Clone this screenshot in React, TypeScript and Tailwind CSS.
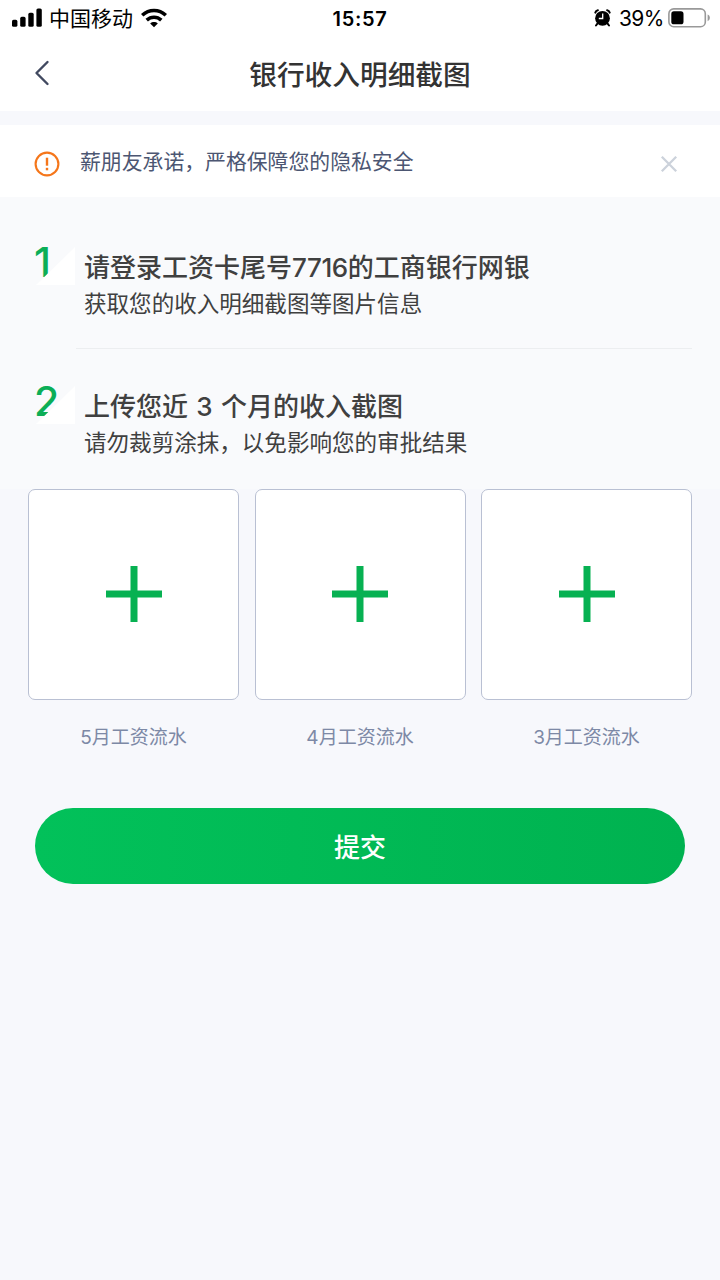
import React from "react";

const months = ["5月工资流水", "4月工资流水", "3月工资流水"];

function SignalIcon() {
  return (
    <svg className="h-5 w-[30px] shrink-0" viewBox="0 0 30 20">
      <rect x="0" y="11.8" width="5.4" height="7" rx="1.6" />
      <rect x="8.2" y="8.8" width="5.4" height="10" rx="1.6" />
      <rect x="16.3" y="4.8" width="5.4" height="14" rx="1.6" />
      <rect x="24.4" y="0.4" width="5.4" height="18.4" rx="1.6" />
    </svg>
  );
}

function WifiIcon() {
  return (
    <svg className="h-5 w-[26px] shrink-0" viewBox="0 0 26 20">
      <g fill="none" stroke="#000" strokeWidth="3.6">
        <path d="M1.2 7.3C8 .9 18 .9 24.8 7.3" />
        <path d="M5.7 12.1c4.3-3.9 10.3-3.9 14.6 0" />
      </g>
      <path d="M13 19.2l-3.8-3.7c2.2-1.9 5.4-1.9 7.6 0z" />
    </svg>
  );
}

function AlarmIcon() {
  return (
    <svg className="h-[18px] w-[17px] shrink-0" viewBox="0 0 17 18">
      <circle cx="8.5" cy="9.3" r="7.4" />
      <g fill="none" stroke="#000" strokeWidth="2" strokeLinecap="round">
        <path d="M1.3 3.6C1.7 2.4 2.6 1.5 3.9 1.2M15.7 3.6c-.4-1.2-1.3-2.1-2.6-2.4M3.4 14.7l-1.4 1.8M13.6 14.7l1.4 1.8" />
      </g>
      <path d="M8.7 4.6v4.9H4.8" fill="none" stroke="#fff" strokeWidth="1.3" />
    </svg>
  );
}

function BatteryIcon() {
  return (
    <svg className="h-5 w-[43px] shrink-0" viewBox="0 0 43 20">
      <rect x="0.9" y="0.9" width="36.4" height="17.8" rx="4.8" fill="#fff" stroke="#999" strokeWidth="1.6" />
      <rect x="3.3" y="3.3" width="12.2" height="13" rx="2.6" />
      <path d="M39.6 6.6c3 1.2 3 5.4 0 6.6z" fill="#999" />
    </svg>
  );
}

function StepNumber({ value }: { value: number }) {
  return (
    <div className="relative h-[39px] w-[39px] shrink-0">
      <span className="-ml-0.5 block text-[41px] font-medium leading-[32px] text-[#0bae57]">{value}</span>
      <svg className="absolute inset-0 h-full w-full" viewBox="0 0 39 39">
        <path d="M39 1v38H0z" fill="#fff" />
      </svg>
    </div>
  );
}

function Step({ value, title, detail }: { value: number; title: React.ReactNode; detail: string }) {
  return (
    <div className="flex gap-[9px] whitespace-nowrap pl-9 text-[#404040]">
      <StepNumber value={value} />
      <div>
        <h2 className="h-[37px] pt-[3px] text-[26px] font-medium leading-[37px]">{title}</h2>
        <p className="h-[37px] pt-0.5 text-[22.55px] leading-[37px]">{detail}</p>
      </div>
    </div>
  );
}

export default function App() {
  return (
    <div className="flex h-[1280px] w-[720px] flex-col overflow-hidden bg-[#f7f8fc] font-['Inter','Noto_Sans_CJK_SC',sans-serif]">
      <div className="grid h-9 shrink-0 grid-cols-3 items-center whitespace-nowrap bg-white text-black">
        <div className="flex items-center pl-3">
          <SignalIcon />
          <span className="ml-[7px] pt-0.5 text-[21px] leading-[34px]">中国移动</span>
          <span className="ml-2 flex"><WifiIcon /></span>
        </div>
        <div className="pt-0.5 text-center text-[20px] font-semibold leading-[34px] tracking-[0.7px]">15:57</div>
        <div className="flex items-center justify-end pr-[9px]">
          <AlarmIcon />
          <span className="ml-2 mr-1 pt-0.5 text-[21px] leading-[34px] tracking-[-0.5px]">39%</span>
          <BatteryIcon />
        </div>
      </div>

      <header className="grid h-[75px] shrink-0 grid-cols-[120px_1fr_120px] items-center bg-white">
        <button className="pb-0.5 pl-[34px]" aria-label="返回">
          <svg className="block h-[26px] w-4" viewBox="0 0 16 26" fill="none" stroke="#414960" strokeWidth="2.4" strokeLinecap="round" strokeLinejoin="round">
            <path d="M13.5 2L2.5 13l11 11" />
          </svg>
        </button>
        <h1 className="pt-1 text-center text-[27.7px] font-medium text-[#333]">银行收入明细截图</h1>
      </header>

      <div className="mt-3.5 flex h-[72px] shrink-0 items-center bg-white pl-[34px] pr-[42px]">
        <svg className="mt-[5px] h-[26px] w-[26px] shrink-0" viewBox="0 0 26 26" fill="none">
          <circle cx="13" cy="13" r="11.4" stroke="#f5761a" strokeWidth="2.1" />
          <path d="M13 6.7v8" stroke="#f5761a" strokeWidth="2.4" />
          <path d="M13 16.8v2.5" stroke="#f5761a" strokeWidth="2.4" />
        </svg>
        <p className="ml-5 flex-1 whitespace-nowrap pt-px text-[20.85px] text-[#4c5672]">薪朋友承诺，严格保障您的隐私安全</p>
        <button className="mt-[5px]" aria-label="关闭">
          <svg className="block h-[18px] w-[18px]" viewBox="0 0 18 18" stroke="#ccd2db" strokeWidth="2.3">
            <path d="M1.8 1.8l14.4 14.4M16.2 1.8L1.8 16.2" />
          </svg>
        </button>
      </div>

      <section className="h-[292px] shrink-0 bg-[#f9fafc] pt-[49px]">
        <Step
          value={1}
          title={<>请登录工资卡尾号<span className="tracking-[-0.4px]">7716</span>的工商银行网银</>}
          detail="获取您的收入明细截图等图片信息"
        />
        <div className="ml-[76px] mr-7 mt-7 h-px bg-[#eceef0]" />
        <div className="pt-9">
          <Step
            value={2}
            title={<span className="[word-spacing:1.4px]">上传您近 3 个月的收入截图</span>}
            detail="请勿裁剪涂抹，以免影响您的审批结果"
          />
        </div>
      </section>

      <section className="grid shrink-0 grid-cols-3 gap-[15.5px] px-7">
        {months.map((label) => (
          <div key={label}>
            <button className="flex h-[211px] w-full items-center justify-center rounded-[7px] border border-[#b9c0d3] bg-white pb-px" aria-label={label}>
              <svg className="h-14 w-14" viewBox="0 0 56 56" fill="#07b152">
                <path d="M24.5 0h7v24.5H56v7H31.5V56h-7V31.5H0v-7h24.5z" />
              </svg>
            </button>
            <p className="mt-[22px] text-center text-[19px] leading-8 text-[#7d89a6]">{label}</p>
          </div>
        ))}
      </section>

      <button className="mx-[35px] mt-[53.5px] h-[76.5px] shrink-0 rounded-full bg-linear-to-r from-[#02c15a] to-[#00b250] pt-[3px] text-[26px] font-medium text-white">
        提交
      </button>
    </div>
  );
}
